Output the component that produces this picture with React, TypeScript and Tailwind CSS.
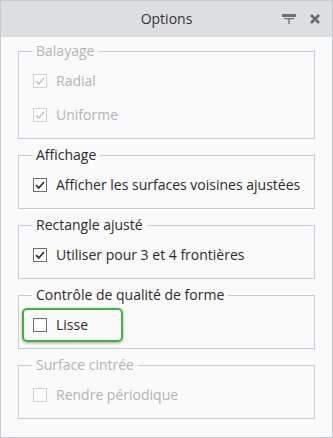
import React from "react";

type Item = { label: string; checked: boolean };
type Group = { title: string; disabled?: boolean; highlight?: boolean; items: Item[] };

const groups: Group[] = [
  {
    title: "Balayage",
    disabled: true,
    items: [
      { label: "Radial", checked: true },
      { label: "Uniforme", checked: true },
    ],
  },
  { title: "Affichage", items: [{ label: "Afficher les surfaces voisines ajustées", checked: true }] },
  { title: "Rectangle ajusté", items: [{ label: "Utiliser pour 3 et 4 frontières", checked: true }] },
  { title: "Contrôle de qualité de forme", highlight: true, items: [{ label: "Lisse", checked: false }] },
  { title: "Surface cintrée", disabled: true, items: [{ label: "Rendre périodique", checked: false }] },
];

function Check({ checked, disabled }: { checked: boolean; disabled?: boolean }) {
  return (
    <span
      className={`flex h-[14px] w-[14px] shrink-0 items-center justify-center border bg-white ${
        disabled ? "border-[#d0d0d0]" : "border-[#6e6e6e]"
      }`}
    >
      {checked && (
        <svg width="12" height="12" viewBox="0 0 12 12">
          <path
            d="M2 6.2 L4.8 9 L10 3"
            fill="none"
            stroke={disabled ? "#c8c8c8" : "#333"}
            strokeWidth="1.8"
          />
        </svg>
      )}
    </span>
  );
}

function Row({ item, disabled, highlight }: { item: Item; disabled?: boolean; highlight?: boolean }) {
  const row = (
    <div className={`flex h-5 items-center gap-[9px] whitespace-nowrap ${disabled ? "text-[#b4b4b4]" : "text-[#2b2b2b]"}`}>
      <Check checked={item.checked} disabled={disabled} />
      <span>{item.label}</span>
    </div>
  );
  if (!highlight) return <div className="pl-[14px]">{row}</div>;
  return (
    <div className="-my-[7px] ml-[3px] w-[101px] rounded-[5px] border-2 border-[#3fb43a] py-[5px] pl-[9px] shadow-[0_1px_3px_rgba(0,0,0,0.35)]">
      {row}
    </div>
  );
}

export default function App() {
  return (
    <div
      className="h-[438px] w-[333px] overflow-hidden border border-[#c6c9cc] bg-[#fafafa] text-[14px] leading-5"
      style={{ fontFamily: '"Open Sans", "Noto Sans", sans-serif' }}
    >
      <div className="relative flex h-[36px] items-center justify-center bg-[#dcdfe1] text-[#333]">
        <span>Options</span>
        <div className="absolute right-[11px] top-[12px] flex items-center gap-[12px]">
          <svg width="16" height="12" viewBox="0 0 16 12">
            <rect x="1" y="1" width="14" height="3" fill="#707070" />
            <rect x="3" y="5" width="10" height="1.2" fill="#707070" />
            <rect x="7.4" y="5" width="1.4" height="6" fill="#707070" />
          </svg>
          <svg width="12" height="12" viewBox="0 0 12 12">
            <path d="M2 2 L10 10 M10 2 L2 10" stroke="#6a6a6a" strokeWidth="2.6" />
          </svg>
        </div>
      </div>
      <div className="flex flex-col gap-[6px] px-[17px] pt-[4px]">
        {groups.map((g) => (
          <fieldset
            key={g.title}
            className="border border-[#c9cdd1] px-0 pb-[13px] pt-[10px]"
          >
            <legend
              className={`ml-[13px] px-[4px] ${g.disabled ? "text-[#b4b4b4]" : "text-[#2b2b2b]"}`}
            >
              {g.title}
            </legend>
            <div className="flex flex-col gap-[14px]">
              {g.items.map((it) => (
                <Row key={it.label} item={it} disabled={g.disabled} highlight={g.highlight} />
              ))}
            </div>
          </fieldset>
        ))}
      </div>
    </div>
  );
}
